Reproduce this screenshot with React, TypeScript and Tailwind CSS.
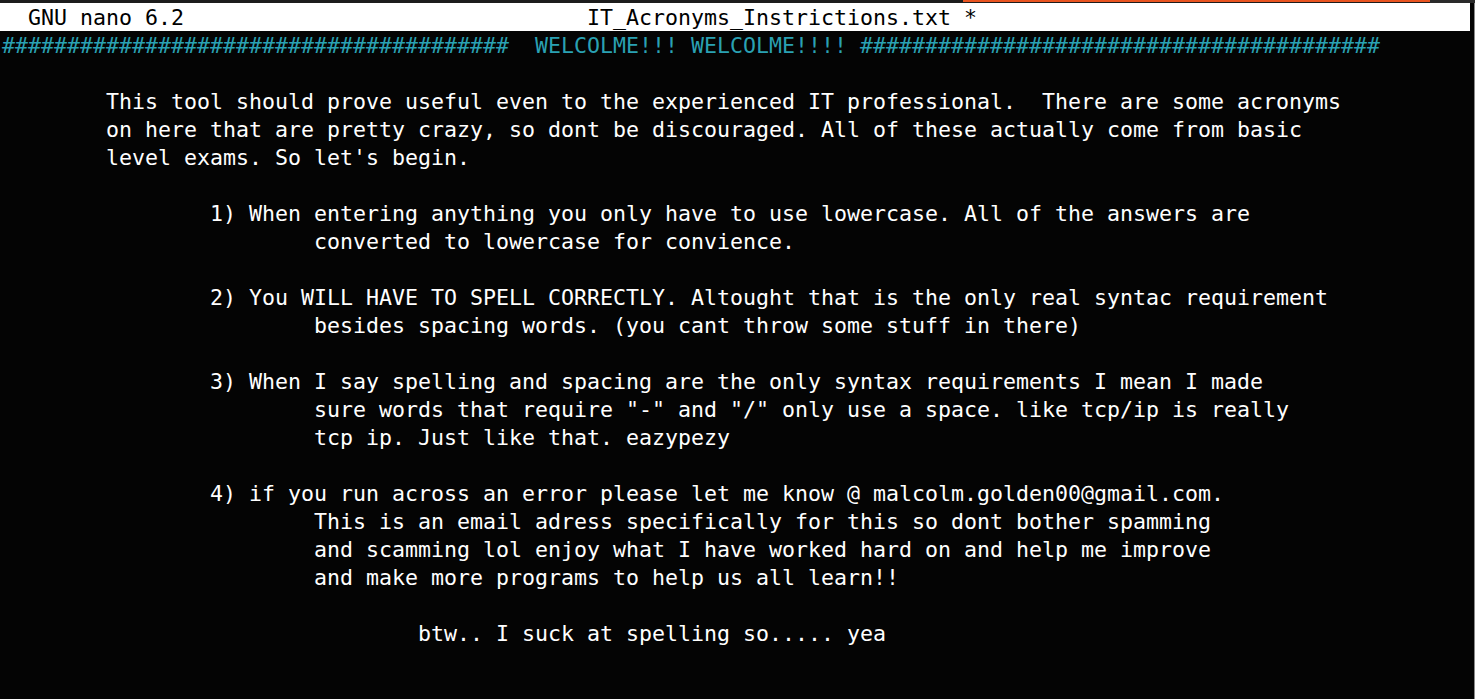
const leftHashes = '#'.repeat(39);
const rightHashes = '#'.repeat(40);

const body: { text: string; cyan?: boolean }[] = [
  { text: `${leftHashes}  WELCOLME!!! WELCOLME!!!! ${rightHashes}`, cyan: true },
  { text: '' },
  { text: '        This tool should prove useful even to the experienced IT professional.  There are some acronyms' },
  { text: '        on here that are pretty crazy, so dont be discouraged. All of these actually come from basic' },
  { text: "        level exams. So let's begin." },
  { text: '' },
  { text: '                1) When entering anything you only have to use lowercase. All of the answers are' },
  { text: '                        converted to lowercase for convience.' },
  { text: '' },
  { text: '                2) You WILL HAVE TO SPELL CORRECTLY. Altought that is the only real syntac requirement' },
  { text: '                        besides spacing words. (you cant throw some stuff in there)' },
  { text: '' },
  { text: '                3) When I say spelling and spacing are the only syntax requirements I mean I made' },
  { text: '                        sure words that require "-" and "/" only use a space. like tcp/ip is really' },
  { text: '                        tcp ip. Just like that. eazypezy' },
  { text: '' },
  { text: '                4) if you run across an error please let me know @ malcolm.golden00@gmail.com.' },
  { text: '                        This is an email adress specifically for this so dont bother spamming' },
  { text: '                        and scamming lol enjoy what I have worked hard on and help me improve' },
  { text: '                        and make more programs to help us all learn!!' },
  { text: '' },
  { text: '                                btw.. I suck at spelling so..... yea' },
  { text: '' },
  { text: '' },
];

const titleLine = '  GNU nano 6.2' + ' '.repeat(31) + 'IT_Acronyms_Instrictions.txt *';

export default function App() {
  return (
    <div className="w-[1475px] h-[699px] bg-[#040404] overflow-hidden flex flex-col">
      {/* window top edge */}
      <div className="h-[3px] flex shrink-0">
        <div className="w-[963px] bg-[#1c1c1c]" />
        <div className="w-[467px] flex flex-col">
          <div className="h-[2px] bg-[#e95420]" />
          <div className="h-[1px] bg-[#1c1c1c]" />
        </div>
        <div className="flex-1 bg-[#2a2a2a]" />
      </div>

      <div className="flex flex-1 min-h-0">
        {/* terminal */}
        <div className="w-[1470px] flex flex-col font-['DejaVu_Sans_Mono',monospace] text-[21.6px] leading-[28px]">
          <div className="h-[28px] bg-white text-black whitespace-pre pl-[2px] pt-[1px] shrink-0">{titleLine}</div>
          {body.map((line, i) => (
            <div
              key={i}
              className={`h-[28px] whitespace-pre pl-[2px] pt-[1px] shrink-0 ${line.cyan ? 'text-[#2aa1b3]' : 'text-white'}`}
            >
              {line.text}
            </div>
          ))}
        </div>
        {/* right edge */}
        <div className="flex-1 flex justify-end bg-[#040404]">
          <div className="w-[1px] bg-[#8a8a8a]" />
        </div>
      </div>
    </div>
  );
}
